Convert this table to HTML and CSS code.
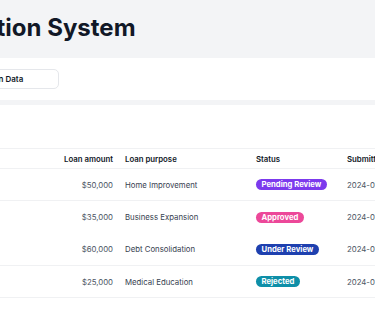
FILE: index.html
```html
<!DOCTYPE html>
<html lang="en">
<head>
<meta charset="utf-8">
<title>Loan Application System</title>
<link rel="stylesheet" href="styles.css">
</head>
<body>
  <div class="page">
    <header class="page-header">
      <h1 class="page-title">Loan Application System</h1>
    </header>

    <section class="toolbar">
      <input class="search" type="text" placeholder="Search">
      <button class="btn" type="button">Export Loan Data</button>
    </section>

    <section class="card">
      <h2 class="card-title">Applications</h2>
      <table class="loans">
        <colgroup>
          <col class="c-name">
          <col class="c-amount">
          <col class="c-purpose">
          <col class="c-status">
          <col class="c-date">
          <col class="c-actions">
        </colgroup>
        <thead>
          <tr>
            <th>Applicant</th>
            <th class="num">Loan amount</th>
            <th>Loan purpose</th>
            <th>Status</th>
            <th>Submitted</th>
            <th>Actions</th>
          </tr>
        </thead>
        <tbody>
          <tr>
            <td class="name">Sarah Johnson</td>
            <td class="num">$50,000</td>
            <td class="purpose">Home Improvement</td>
            <td><span class="badge badge-pending">Pending Review</span></td>
            <td class="date">2024-01-15</td>
            <td class="date">View</td>
          </tr>
          <tr class="no-rule">
            <td class="name">Michael Chen</td>
            <td class="num">$35,000</td>
            <td class="purpose">Business Expansion</td>
            <td><span class="badge badge-approved">Approved</span></td>
            <td class="date">2024-01-12</td>
            <td class="date">View</td>
          </tr>
          <tr>
            <td class="name">Emily Rodriguez</td>
            <td class="num">$60,000</td>
            <td class="purpose">Debt Consolidation</td>
            <td><span class="badge badge-review">Under Review</span></td>
            <td class="date">2024-01-10</td>
            <td class="date">View</td>
          </tr>
          <tr>
            <td class="name">David Kim</td>
            <td class="num">$25,000</td>
            <td class="purpose">Medical Education</td>
            <td><span class="badge badge-rejected">Rejected</span></td>
            <td class="date">2024-01-08</td>
            <td class="date">View</td>
          </tr>
        </tbody>
      </table>
    </section>
  </div>
</body>
</html>
```

FILE: styles.css
```css
* {
  box-sizing: border-box;
}

html,
body {
  margin: 0;
  padding: 0;
}

/* The page is wider than the screen; centring it lets the data columns
   sit in view while the wide layout spills off both edges. */
body {
  background: #f3f4f6;
  font-family: Inter, "Noto Sans", "Liberation Sans", sans-serif;
  color: #111827;
  display: flex;
  justify-content: center;
  overflow: hidden;
  min-height: 318px;
}

.page {
  flex: 0 0 707px;
  width: 707px;
  min-height: 318px;
  display: flex;
  flex-direction: column;
  gap: 5px;
}

.page-header {
  background: #f3f4f6;
  padding: 12px 18px 14px 10px;
  margin-bottom: -5px;
}

.page-title {
  margin: 0;
  font-size: 24px;
  line-height: 32px;
  font-weight: 700;
  color: #111827;
  white-space: nowrap;
}

.toolbar {
  background: #fff;
  height: 42px;
  padding: 11px 18px 0;
  display: flex;
  align-items: flex-start;
  gap: 6px;
}

.search {
  width: 90px;
  height: 20px;
  padding: 0 8px;
  font-family: inherit;
  font-size: 8px;
  color: #111827;
  background: #fff;
  border: 1px solid #e5e7eb;
  border-radius: 5px;
}

.btn {
  width: 111px;
  height: 20px;
  padding: 0 8px;
  text-align: left;
  font-family: inherit;
  font-size: 8px;
  font-weight: 600;
  color: #111827;
  background: #fff;
  border: 1px solid #e5e7eb;
  border-radius: 5px;
  white-space: nowrap;
}

.card {
  background: #fff;
  flex: 1;
  padding: 0 18px 18px;
}

.card-title {
  margin: 0;
  height: 43px;
  padding-top: 14px;
  font-size: 12px;
  font-weight: 600;
  color: #111827;
}

.loans {
  border-collapse: collapse;
  table-layout: fixed;
  width: 669px;
  font-size: 7.8px;
  border-top: 1px solid #f0f1f3;
}

.c-name { width: 187px; }
.c-amount { width: 80px; }
.c-purpose { width: 131px; }
.c-status { width: 91px; }
.c-date { width: 100px; }
.c-actions { width: 80px; }

.loans th {
  height: 20px;
  padding: 0 6px;
  text-align: left;
  font-weight: 600;
  color: #111827;
  border-bottom: 1px solid #f0f1f3;
  white-space: nowrap;
}

.loans td {
  height: 32.3px;
  padding: 0 6px;
  color: #4b5563;
  border-bottom: 1px solid #f0f1f3;
  white-space: nowrap;
}

.loans tr.no-rule td {
  border-bottom: none;
}

.loans .num {
  text-align: right;
}

.loans td.purpose {
  color: #374151;
}

.badge {
  display: inline-block;
  height: 11px;
  line-height: 11px;
  padding: 0 5.5px;
  border-radius: 999px;
  font-size: 7.7px;
  font-weight: 700;
  color: #fff;
  vertical-align: middle;
}

.badge-pending { background: #7c3aed; }
.badge-approved { background: #ec4899; }
.badge-review { background: #1e40af; }
.badge-rejected { background: #0e8fa8; }
```
